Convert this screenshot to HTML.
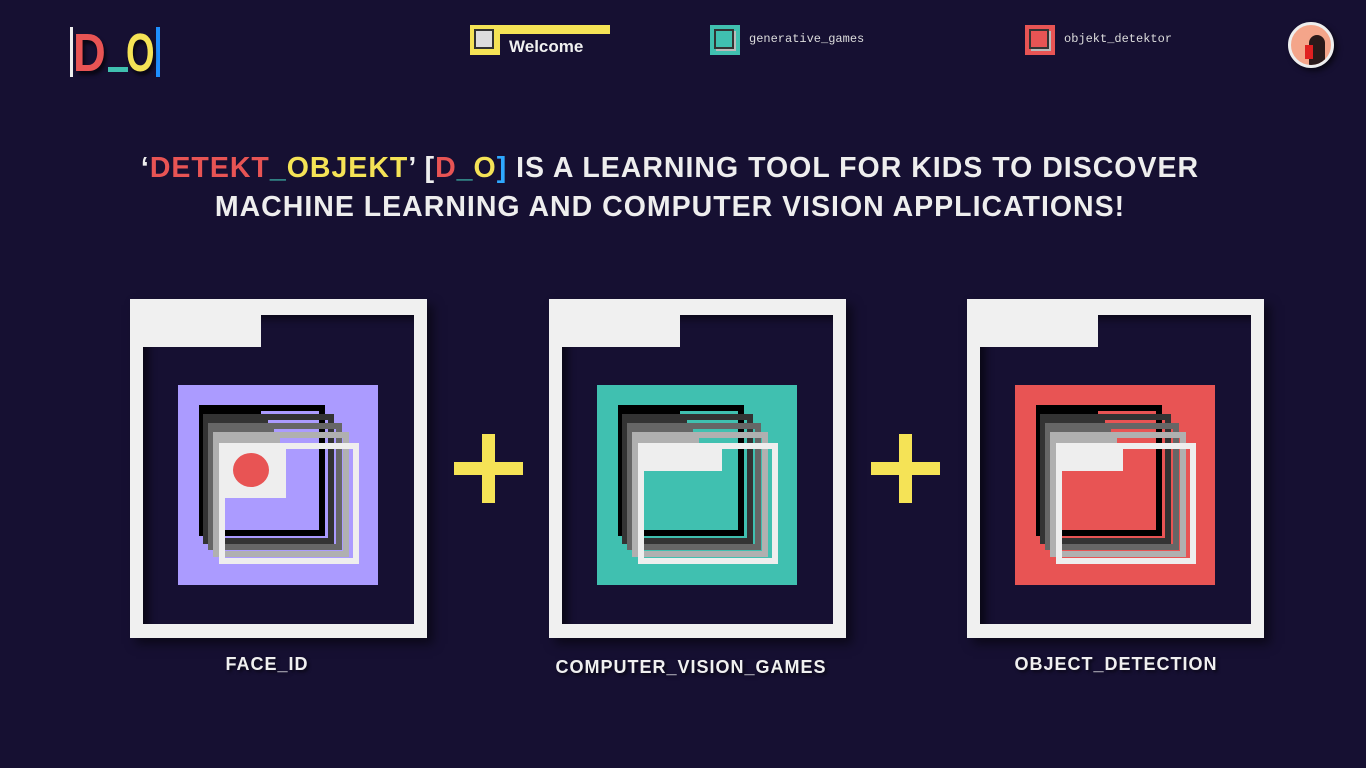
<!DOCTYPE html>
<html><head><meta charset="utf-8"><style>
*{margin:0;padding:0;box-sizing:border-box}
body{width:1366px;height:768px;background:#161032;position:relative;overflow:hidden;font-family:"Liberation Sans",sans-serif;color:#f0f0f0}
.a{position:absolute}
.card{position:absolute;top:299px;width:297px;height:339px;background:#f0f0f0;box-shadow:6px 6px 10px rgba(0,0,0,.5)}
.inner{position:absolute;left:13px;top:16px;right:13px;bottom:14px;background:#161032;box-shadow:inset 10px 8px 8px -4px rgba(0,0,0,.55)}
.tab{position:absolute;left:13px;top:0;width:118px;height:48px;background:#f0f0f0}
.sq{position:absolute;left:48px;top:86px;width:200px;height:200px}
.fr{position:absolute;border:6px solid}
.fr i{position:absolute;left:-1px;top:-1px;height:10px;width:50%}
.lbl{position:absolute;top:654px;font-weight:bold;font-size:18px;letter-spacing:1px;text-align:center;width:400px;text-shadow:2px 2px 3px rgba(0,0,0,.6)}
.plus{position:absolute;background:#f5e356}
.mono{font-family:"Liberation Mono",monospace;font-size:12px;color:#ddd}
.lg{position:absolute;top:25px;font-size:54px;font-weight:bold;line-height:56px;text-shadow:3px 4px 4px rgba(0,0,0,.6)}
</style></head><body>
<!-- logo -->
<div class="a" style="left:70px;top:27px;width:3px;height:50px;background:#eee"></div>
<div class="a" style="left:156px;top:27px;width:4px;height:50px;background:#1e90ff"></div>
<div class="lg" style="left:73px;color:#e85454;transform:scaleX(.84);transform-origin:left">D</div>
<div class="a" style="left:108px;top:67px;width:20px;height:5px;background:#40c0b0"></div>
<div class="lg" style="left:126px;color:#f5e356;transform:scaleX(.68);transform-origin:left">O</div>
<!-- nav -->
<div class="a" style="left:470px;top:25px;width:30px;height:30px;background:#f5e356"></div>
<div class="a" style="left:474px;top:29px;width:20px;height:20px;border:2px solid #333;background:#ddd"></div>
<div class="a" style="left:500px;top:25px;width:110px;height:9px;background:#f5e356"></div>
<div class="a" style="left:509px;top:37px;font-size:17px;font-weight:bold">Welcome</div>
<div class="a" style="left:710px;top:25px;width:30px;height:30px;background:#40c0b0"></div>
<div class="a" style="left:714px;top:29px;width:20px;height:20px;border:2px solid #333;background:#40c0b0;box-shadow:2px 2px 0 #bbb"></div>
<div class="a mono" style="left:749px;top:32px">generative_games</div>
<div class="a" style="left:1025px;top:25px;width:30px;height:30px;background:#e85454"></div>
<div class="a" style="left:1029px;top:29px;width:20px;height:20px;border:2px solid #333;background:#e85454;box-shadow:2px 2px 0 #bbb"></div>
<div class="a mono" style="left:1064px;top:32px">objekt_detektor</div>
<div class="a" style="left:1288px;top:22px;width:46px;height:46px;border-radius:50%;border:3px solid #eee;background:#f4a58a;box-shadow:3px 3px 6px rgba(0,0,0,.6);overflow:hidden"><div class="a" style="left:18px;top:10px;width:16px;height:34px;background:#2a1a1a;border-radius:8px 8px 0 0"></div><div class="a" style="left:14px;top:20px;width:8px;height:14px;background:#e02020"></div></div>
<!-- headline -->
<div class="a" style="left:0;width:1340px;top:149px;text-align:center;font-size:28.5px;font-weight:bold;letter-spacing:1px;line-height:39px;color:#eee">‘<span style="color:#e85454">DETEKT</span><span style="color:#40c0b0">_</span><span style="color:#f5e356">OBJEKT</span>’ [<span style="color:#e85454">D</span><span style="color:#40c0b0">_</span><span style="color:#f5e356">O</span><span style="color:#2ea8ff">]</span> IS A LEARNING TOOL FOR KIDS TO DISCOVER<br>MACHINE LEARNING AND COMPUTER VISION APPLICATIONS!</div>

<!-- card 1 -->
<div class="card" style="left:130px"><div class="inner"></div><div class="tab"></div>
<div class="sq" style="background:#ab9bff">
 <div class="fr" style="left:21px;top:20px;width:126px;height:131px;border-color:#000"><i style="background:#000"></i></div>
 <div class="fr" style="left:25px;top:29px;width:131px;height:130px;border-color:#333"><i style="background:#333"></i></div>
 <div class="fr" style="left:30px;top:38px;width:134px;height:127px;border-color:#666"><i style="background:#666"></i></div>
 <div class="fr" style="left:35px;top:47px;width:136px;height:125px;border-color:#b0b0b0"><i style="background:#b0b0b0"></i></div>
 <div class="fr" style="left:41px;top:58px;width:140px;height:121px;border-color:#eee"><i style="background:#eee;width:62px;height:50px"></i></div>
 <div class="a" style="left:55px;top:68px;width:36px;height:34px;border-radius:50%;background:#e85454"></div>
</div></div>
<!-- card 2 -->
<div class="card" style="left:549px"><div class="inner"></div><div class="tab"></div>
<div class="sq" style="background:#40c0b0">
 <div class="fr" style="left:21px;top:20px;width:126px;height:131px;border-color:#000"><i style="background:#000"></i></div>
 <div class="fr" style="left:25px;top:29px;width:131px;height:130px;border-color:#333"><i style="background:#333"></i></div>
 <div class="fr" style="left:30px;top:38px;width:134px;height:127px;border-color:#666"><i style="background:#666"></i></div>
 <div class="fr" style="left:35px;top:47px;width:136px;height:125px;border-color:#b0b0b0"><i style="background:#b0b0b0"></i></div>
 <div class="fr" style="left:41px;top:58px;width:140px;height:121px;border-color:#eee"><i style="background:#eee;width:79px;height:23px"></i></div>
</div></div>
<!-- card 3 -->
<div class="card" style="left:967px"><div class="inner"></div><div class="tab"></div>
<div class="sq" style="background:#e85454">
 <div class="fr" style="left:21px;top:20px;width:126px;height:131px;border-color:#000"><i style="background:#000"></i></div>
 <div class="fr" style="left:25px;top:29px;width:131px;height:130px;border-color:#333"><i style="background:#333"></i></div>
 <div class="fr" style="left:30px;top:38px;width:134px;height:127px;border-color:#666"><i style="background:#666"></i></div>
 <div class="fr" style="left:35px;top:47px;width:136px;height:125px;border-color:#b0b0b0"><i style="background:#b0b0b0"></i></div>
 <div class="fr" style="left:41px;top:58px;width:140px;height:121px;border-color:#eee"><i style="background:#eee;width:62px;height:23px"></i></div>
</div></div>

<!-- plus -->
<div class="plus" style="left:482px;top:434px;width:13px;height:69px"></div>
<div class="plus" style="left:454px;top:462px;width:69px;height:13px"></div>
<div class="plus" style="left:899px;top:434px;width:13px;height:69px"></div>
<div class="plus" style="left:871px;top:462px;width:69px;height:13px"></div>

<div class="lbl" style="left:67px">FACE_ID</div>
<div class="lbl" style="left:491px;top:657px">COMPUTER_VISION_GAMES</div>
<div class="lbl" style="left:916px">OBJECT_DETECTION</div>
</body></html>
